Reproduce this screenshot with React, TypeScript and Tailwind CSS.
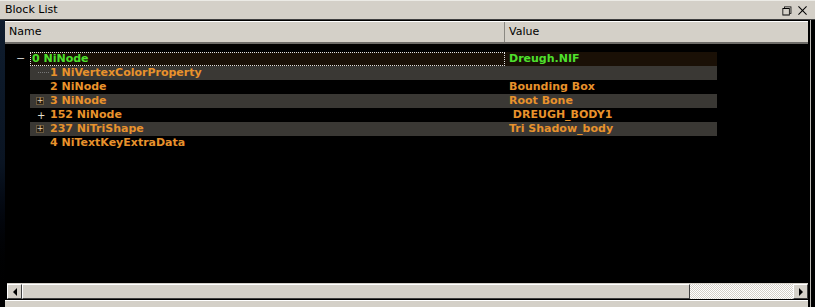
import { VscChromeRestore, VscChromeClose } from "react-icons/vsc";

type Row = {
  name: string;
  value: string;
  striped: boolean;
  indent: boolean;
  toggle?: "minus" | "box" | "plus";
  green?: boolean;
};

const rows: Row[] = [
  { name: "0 NiNode", value: "Dreugh.NIF", striped: false, indent: false, toggle: "minus", green: true },
  { name: "1 NiVertexColorProperty", value: "", striped: true, indent: true },
  { name: "2 NiNode", value: "Bounding Box", striped: false, indent: true },
  { name: "3 NiNode", value: "Root Bone", striped: true, indent: true, toggle: "box" },
  { name: "152 NiNode", value: "\u00a0DREUGH_BODY1", striped: false, indent: true, toggle: "plus" },
  { name: "237 NiTriShape", value: "Tri Shadow_body", striped: true, indent: true, toggle: "box" },
  { name: "4 NiTextKeyExtraData", value: "", striped: false, indent: true },
];

const TreeRow = ({ row, index }: { row: Row; index: number }) => {
  const bg = row.green ? "bg-[#1a1006]" : row.striped ? "bg-[#3a3834]" : "bg-black";
  const text = row.green ? "text-[#4ee02c]" : "text-[#e8922c]";

  return (
    <div className="flex h-[14px] items-center">
      <div className="relative w-[25px] h-full">
        {row.toggle === "minus" && (
          <span className="absolute left-[11px] top-[-1px] text-[#c8c8c8] text-[11px]">−</span>
        )}
      </div>
      <div className={`flex w-[687px] h-full ${bg}`}>
        <div
          className={`relative flex items-center w-[475px] h-full ${
            index === 0 ? "border border-dotted border-[#e0e0e0]" : ""
          }`}
        >
          {row.toggle === "box" && (
            <span className="absolute left-[6px] top-[3px] w-[8px] h-[8px] border border-[#6b5a3e] bg-[#2a2014] flex items-center justify-center text-[#e8d8b8] text-[8px] leading-none">
              +
            </span>
          )}
          {row.toggle === "plus" && (
            <span className="absolute left-[7px] top-[0px] text-[#e8e0d0] text-[10px]">+</span>
          )}
          {index === 1 && (
            <span className="absolute left-[8px] top-[6px] w-[11px] border-t border-dotted border-[#777]" />
          )}
          <span
            className={`${text} font-bold text-[11px] whitespace-pre ${
              row.indent ? "pl-[20px]" : "pl-[1px]"
            }`}
          >
            {row.name}
          </span>
        </div>
        <div className="flex items-center h-full pl-[4px]">
          <span className={`${text} font-bold text-[11px] whitespace-pre`}>{row.value}</span>
        </div>
      </div>
    </div>
  );
};

export default function App() {
  return (
    <div className="w-[815px] h-[307px] bg-black overflow-hidden flex flex-col font-['DejaVu_Sans',Tahoma,sans-serif]">
      <div className="h-[20px] bg-[#d4d0c8] border-t border-[#ecebe6] border-b border-b-[#404040] flex items-center justify-between pl-[5px] pr-[6px] text-[11px] text-black">
        <span>Block List</span>
        <div className="flex items-center gap-[3px]">
          <VscChromeRestore size={13} />
          <VscChromeClose size={13} />
        </div>
      </div>

      <div className="flex flex-1">
        <div className="w-[5px] bg-gradient-to-b from-[#0f1d2e] via-[#0a1422] to-black" />
        <div className="flex flex-col w-[803px]">
          <div className="h-[23px] mt-[1px] flex bg-[#d4d0c8] border-t border-white border-b-2 border-b-[#6e6c68] text-[11px] text-black">
            <div className="w-[500px] pl-[4px] flex items-center border-r border-[#8a8882]">Name</div>
            <div className="flex-1 pl-[4px] flex items-center">Value</div>
          </div>

          <div className="flex-1 pt-[8px] bg-black">
            {rows.map((row, i) => (
              <TreeRow key={i} row={row} index={i} />
            ))}
          </div>

          <div className="h-[16px] ml-[2px] flex border-t border-[#d4d0c8] bg-[#d4d0c8] mb-[1px]">
            <div className="w-[15px] h-[15px] border border-t-white border-l-white border-r-[#404040] border-b-[#404040] flex items-center justify-center">
              <span className="w-0 h-0 border-y-[4px] border-y-transparent border-r-[4px] border-r-black" />
            </div>
            <div className="w-[668px] h-[15px] border border-t-white border-l-white border-r-[#404040] border-b-[#404040] bg-[#d4d0c8]" />
            <div className="flex-1 h-[15px] bg-[repeating-conic-gradient(#ffffff_0_25%,#d4d0c8_0_50%)] bg-[length:2px_2px]" />
            <div className="w-[15px] h-[15px] border border-t-white border-l-white border-r-[#404040] border-b-[#404040] flex items-center justify-center bg-[#d4d0c8]">
              <span className="w-0 h-0 border-y-[4px] border-y-transparent border-l-[4px] border-l-black" />
            </div>
          </div>
          <div className="h-[7px] ml-[0px] bg-[#d4d0c8] border-t border-white" />
        </div>
        <div className="w-[7px] flex">
          <div className="w-[2px]" />
          <div className="w-[1px] bg-[#bcbab4]" />
        </div>
      </div>
    </div>
  );
}
